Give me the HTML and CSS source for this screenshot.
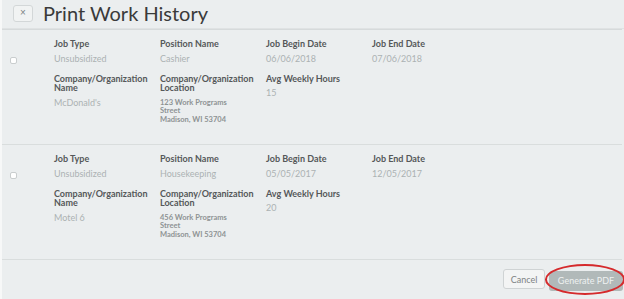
FILE: index.html
```html
<!DOCTYPE html>
<html lang="en">
<head>
    <meta charset="UTF-8">
    <title>Print Work History</title>
    <link rel="stylesheet" href="styles.css">
</head>
<body>
    <div class="modal">
        <div class="modal-header">
            <button class="close-btn">&times;</button>
            <h1>Print Work History</h1>
        </div>
        <div class="job-list">
            <div class="job-row">
                <div class="check-cell"><input type="checkbox"></div>
                <div class="job-grid">
                    <div class="field">
                        <div class="label">Job Type</div>
                        <div class="value">Unsubsidized</div>
                    </div>
                    <div class="field">
                        <div class="label">Position Name</div>
                        <div class="value">Cashier</div>
                    </div>
                    <div class="field">
                        <div class="label">Job Begin Date</div>
                        <div class="value">06/06/2018</div>
                    </div>
                    <div class="field">
                        <div class="label">Job End Date</div>
                        <div class="value">07/06/2018</div>
                    </div>
                    <div class="field">
                        <div class="label">Company/Organization Name</div>
                        <div class="value">McDonald's</div>
                    </div>
                    <div class="field">
                        <div class="label">Company/Organization Location</div>
                        <div class="address">123 Work Programs Street<br>Madison, WI 53704</div>
                    </div>
                    <div class="field">
                        <div class="label">Avg Weekly Hours</div>
                        <div class="value">15</div>
                    </div>
                </div>
            </div>
            <div class="job-row">
                <div class="check-cell"><input type="checkbox"></div>
                <div class="job-grid">
                    <div class="field">
                        <div class="label">Job Type</div>
                        <div class="value">Unsubsidized</div>
                    </div>
                    <div class="field">
                        <div class="label">Position Name</div>
                        <div class="value">Housekeeping</div>
                    </div>
                    <div class="field">
                        <div class="label">Job Begin Date</div>
                        <div class="value">05/05/2017</div>
                    </div>
                    <div class="field">
                        <div class="label">Job End Date</div>
                        <div class="value">12/05/2017</div>
                    </div>
                    <div class="field">
                        <div class="label">Company/Organization Name</div>
                        <div class="value">Motel 6</div>
                    </div>
                    <div class="field">
                        <div class="label">Company/Organization Location</div>
                        <div class="address">456 Work Programs Street<br>Madison, WI 53704</div>
                    </div>
                    <div class="field">
                        <div class="label">Avg Weekly Hours</div>
                        <div class="value">20</div>
                    </div>
                </div>
            </div>
        </div>
        <div class="modal-footer">
            <button class="btn btn-cancel">Cancel</button>
            <div class="highlight-wrap">
                <button class="btn btn-primary">Generate PDF</button>
                <span class="highlight-ring"></span>
            </div>
        </div>
    </div>
</body>
</html>
```

FILE: styles.css
```css
body {
    margin: 0;
    padding-left: 2px;
    background: #f7f8f8;
    font-family: Lato, "Open Sans", Arial, sans-serif;
}
.modal {
    background: #ebeeef;
    height: 299px;
    display: flex;
    flex-direction: column;
}
.modal-header {
    display: flex;
    align-items: center;
    height: 28px;
    padding-left: 11px;
    border-bottom: 1px solid #dfe2e3;
}
.close-btn {
    width: 20px;
    height: 17px;
    padding: 0;
    margin-top: -2px;
    border: 1px solid #d3d7d8;
    border-radius: 3px;
    background: #f1f3f3;
    color: #7d8384;
    font-size: 10px;
    line-height: 14px;
    font-family: Arial, sans-serif;
}
h1 {
    margin: -3px 0 0 10px;
    font-size: 20px;
    font-weight: normal;
    color: #3a3a3a;
}
.job-list {
    border-top: 1px solid #d6dadb;
    margin-right: 2px;
}
.job-row {
    display: flex;
    height: 115px;
    box-sizing: border-box;
    padding-top: 9px;
    border-bottom: 1px solid #d9dddd;
}
.check-cell {
    width: 52px;
}
.check-cell input {
    appearance: none;
    width: 7px;
    height: 7px;
    margin: 18px 0 0 8px;
    border: 1px solid #c9cdce;
    border-radius: 2px;
    background: #fff;
}
.job-grid {
    display: grid;
    grid-template-columns: repeat(4, 106px);
    row-gap: 10px;
    align-content: start;
}
.field .label {
    font-size: 9px;
    line-height: 9.5px;
    font-weight: bold;
    color: #555859;
    width: 90px;
}
.field .value {
    margin-top: 5px;
    font-size: 9px;
    line-height: 10px;
    color: #abb2b3;
}
.field .address {
    margin-top: 6px;
    font-size: 7.5px;
    line-height: 8.5px;
    font-weight: bold;
    color: #8e9394;
    width: 72px;
}
.modal-footer {
    display: flex;
    justify-content: flex-end;
    align-items: center;
    gap: 4px;
    padding: 8px 1px 0 0;
}
.btn {
    height: 20px;
    font-family: Lato, Arial, sans-serif;
    font-size: 9px;
    border-radius: 3px;
}
.btn-cancel {
    width: 42px;
    border: 1px solid #cfd3d4;
    background: #f3f4f4;
    color: #7d8283;
}
.highlight-wrap {
    position: relative;
}
.btn-primary {
    width: 74px;
    border: none;
    background: #b1b9b9;
    color: #eef1f1;
}
.highlight-ring {
    position: absolute;
    left: -4px;
    top: -4px;
    right: -2px;
    bottom: -4px;
    border: 2px solid #d52a2c;
    border-radius: 50%;
}
```
